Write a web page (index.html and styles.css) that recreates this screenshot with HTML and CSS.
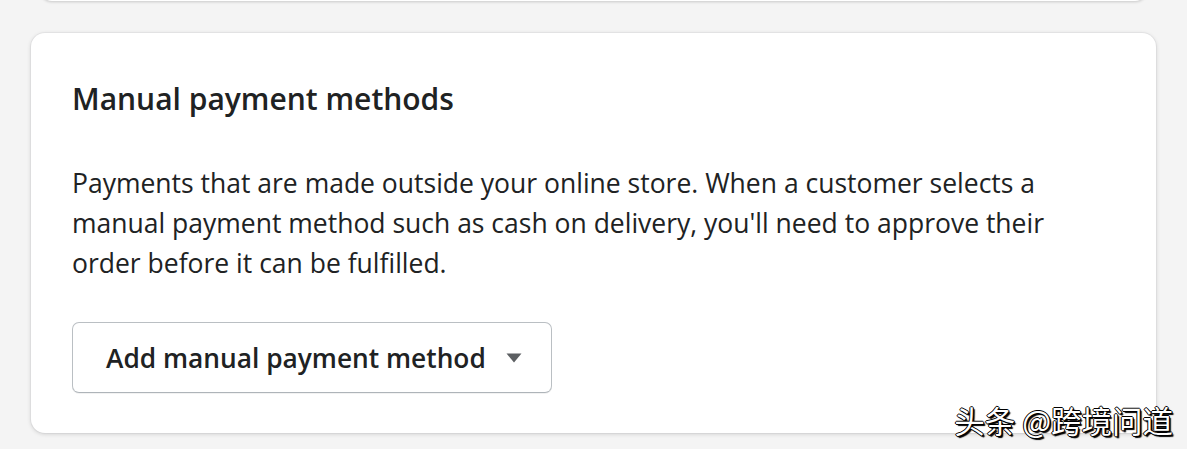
FILE: index.html
```html
<!DOCTYPE html>
<html>
<head>
<meta charset="utf-8">
<link rel="stylesheet" href="styles.css">
</head>
<body>
<div class="page">
  <div class="prev-card"></div>
  <section class="card">
    <h2 class="title">Manual payment methods</h2>
    <p class="desc">Payments that are made outside your online store. When a customer selects a manual payment method such as cash on delivery, you'll need to approve their order before it can be fulfilled.</p>
    <button class="btn">Add manual payment method <svg class="caret" width="16" height="10" viewBox="0 0 16 10"><path d="M0.5 0.5 H15.5 L8 9.5 Z" fill="#5c5f62"/></svg></button>
  </section>
  <div class="watermark">头条 @跨境问道</div>
</div>
</body>
</html>
```
FILE: styles.css
```css
html, body {
  margin: 0;
  padding: 0;
  background: #f4f4f4;
}
.page {
  position: relative;
  width: 1187px;
  height: 449px;
  overflow: hidden;
  font-family: "Open Sans", "Noto Sans", sans-serif;
  color: #202223;
}
.prev-card {
  margin: -20px 40px 0 40px;
  height: 21px;
  background: #fff;
  border-radius: 0 0 12px 12px;
  box-shadow: 0 1px 3px rgba(0,0,0,0.18);
}
.card {
  margin: 32px 31px 0 31px;
  height: 400px;
  box-sizing: border-box;
  background: #fff;
  border-radius: 14px;
  box-shadow: 0 0 0 1px rgba(63,63,68,0.04), 0 1px 4px rgba(0,0,0,0.16);
  padding: 46px 41px 0 41px;
}
.title {
  margin: 0;
  font-size: 30px;
  font-weight: 600;
  line-height: 40px;
  color: #202223;
}
.desc {
  margin: 44px 0 0 0;
  font-size: 26.5px;
  line-height: 40px;
  width: 990px;
  color: #202223;
}
.btn {
  margin-top: 39px;
  display: flex;
  align-items: center;
  gap: 20px;
  height: 71px;
  width: 480px;
  box-sizing: border-box;
  padding: 0 28px 0 33px;
  background: #fff;
  border: 1.5px solid #babfc3;
  border-bottom-color: #aeb4b9;
  border-radius: 7px;
  box-shadow: 0 1px 0 rgba(0,0,0,0.05);
  font-family: inherit;
  font-size: 26.3px;
  line-height: 36px;
  font-weight: 600;
  color: #202223;
}
.caret {
  flex: none;
}
.watermark {
  position: absolute;
  right: 14px;
  bottom: 12px;
  font-family: "Noto Sans CJK SC", sans-serif;
  font-size: 30.5px;
  line-height: 34px;
  color: #fff;
  text-shadow: -1px 0 #000, 1px 0 #000, 0 -1px #000, 0 1px #000, 1px 1px #000, 2px 2px 1px #000;
}
```
